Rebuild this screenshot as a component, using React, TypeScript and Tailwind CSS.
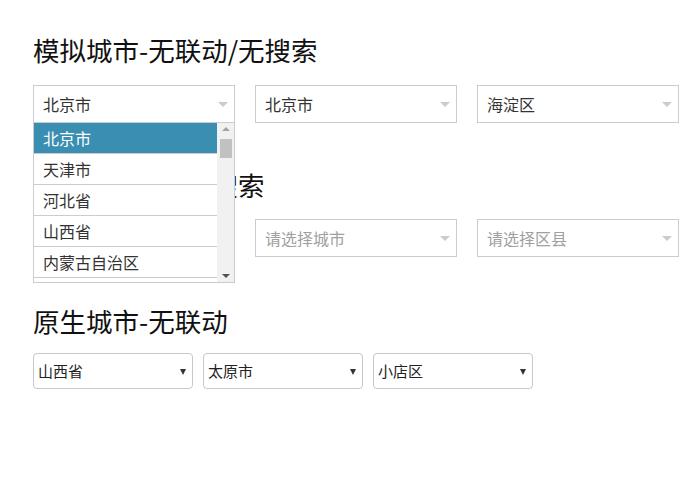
import React from 'react'

const provinces = ['北京市', '天津市', '河北省', '山西省', '内蒙古自治区', '辽宁省']

function Caret() {
  return <span className="inline-block w-0 h-0 border-x-[5px] border-x-transparent border-t-[5px] border-t-[#cccccc]" />
}

function FakeSelect({ value, placeholder }: { value?: string; placeholder?: string }) {
  return (
    <div className="w-[202px] shrink-0 h-[38px] border border-[#cccccc] bg-white flex items-center justify-between pl-[9px] pr-[6px] text-[16px]">
      <span className={value ? 'text-[#333333]' : 'text-[#a0a0a0]'}>{value ?? placeholder}</span>
      <Caret />
    </div>
  )
}

function NativeSelect({ value }: { value: string }) {
  return (
    <div className="relative w-[160px] shrink-0 h-[36px]">
      <select
        defaultValue={value}
        className="w-full h-full appearance-none border border-[#c8c8c8] rounded-[4px] bg-white pl-[4px] text-[15px] text-[#222222] outline-none"
      >
        <option>{value}</option>
      </select>
      <span className="absolute right-[7px] top-[16px] pointer-events-none flex">
        <span className="inline-block w-0 h-0 border-x-[3.5px] border-x-transparent border-t-[6px] border-t-[#333333]" />
      </span>
    </div>
  )
}

function Dropdown() {
  return (
    <div className="absolute left-0 top-[86px] w-[202px] h-[161px] border border-[#cccccc] bg-white flex overflow-hidden z-10">
      <ul className="flex-1">
        {provinces.map((p, i) => (
          <li
            key={p}
            className={`h-[31px] flex items-center pl-[9px] text-[16px] border-b border-[#cccccc] ${
              i === 0 ? 'bg-[#3a8eb1] text-white' : 'text-[#333333]'
            }`}
          >
            {p}
          </li>
        ))}
      </ul>
      {/* scrollbar */}
      <div className="w-[17px] bg-[#f1f1f1] flex flex-col items-center justify-between pt-[4px] pb-[4px]">
        <div className="flex flex-col items-center gap-[8px] w-full">
          <span className="inline-block w-0 h-0 border-x-[4px] border-x-transparent border-b-[4px] border-b-[#a3a3a3]" />
          <div className="w-[12px] h-[19px] bg-[#c1c1c1]" />
        </div>
        <span className="inline-block w-0 h-0 border-x-[4px] border-x-transparent border-t-[4px] border-t-[#505050]" />
      </div>
    </div>
  )
}

export default function App() {
  return (
    <div className="w-[697px] h-[481px] bg-white pl-[33px] pt-[36px]" style={{ fontFamily: '"Noto Sans CJK SC", "Liberation Sans", sans-serif' }}>
      <section className="relative z-10">
        <h3 className="text-[26.5px] leading-[28px] text-[#111111] mb-[21px]">模拟城市-无联动/无搜索</h3>
        <div className="flex gap-[20px]">
          <FakeSelect value="北京市" />
          <FakeSelect value="北京市" />
          <FakeSelect value="海淀区" />
        </div>
        <Dropdown />
      </section>

      <section className="mt-[48px]">
        <h3 className="text-[26.5px] leading-[28px] text-[#111111] mb-[20px]">模拟城市-联动/搜索</h3>
        <div className="flex gap-[20px]">
          <FakeSelect placeholder="请选择省份" />
          <FakeSelect placeholder="请选择城市" />
          <FakeSelect placeholder="请选择区县" />
        </div>
      </section>

      <section className="mt-[50px]">
        <h3 className="text-[26.5px] leading-[28px] text-[#111111] mb-[18px]">原生城市-无联动</h3>
        <div className="flex gap-[10px]">
          <NativeSelect value="山西省" />
          <NativeSelect value="太原市" />
          <NativeSelect value="小店区" />
        </div>
      </section>
    </div>
  )
}
